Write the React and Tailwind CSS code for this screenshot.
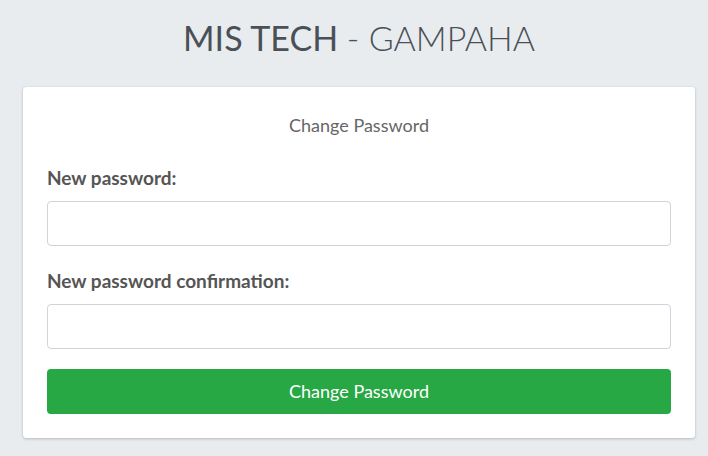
// change password page
export default function App() {
    return (
        <div className="min-h-screen bg-[#e9ecef] font-['Lato',sans-serif] pt-[14px]">
            <div className="ml-[23px] w-[672px]">
                {/* logo */}
                <div className="text-center text-[34px] leading-[48px] text-[#495057]">
                    <span className="font-normal">MIS TECH</span> <span className="font-light">- GAMPAHA</span>
                </div>

                {/* card */}
                <div className="mt-[25px] bg-white rounded-[3px] shadow-[0_0_1px_rgba(0,0,0,0.125),0_1px_3px_rgba(0,0,0,0.2)] px-6 pt-[26px] pb-6">
                    <p className="text-center text-[18px] leading-6 text-[#666]">Change Password</p>

                    <label className="block mt-[29px] mb-[11px] text-[19px] leading-6 font-bold text-[#555]">New password:</label>
                    <input type="password" className="block w-full h-[45px] border border-[#ced4da] rounded-[4px] bg-white px-3" />

                    <label className="block mt-[23px] mb-[11px] text-[19px] leading-6 font-bold text-[#555]">New password confirmation:</label>
                    <input type="password" className="block w-full h-[45px] border border-[#ced4da] rounded-[4px] bg-white px-3" />

                    <button type="button" className="mt-5 w-full h-[45px] rounded-[4px] bg-[#28a745] text-white text-[18px]">Change Password</button>
                </div>
            </div>
        </div>
    );
}
